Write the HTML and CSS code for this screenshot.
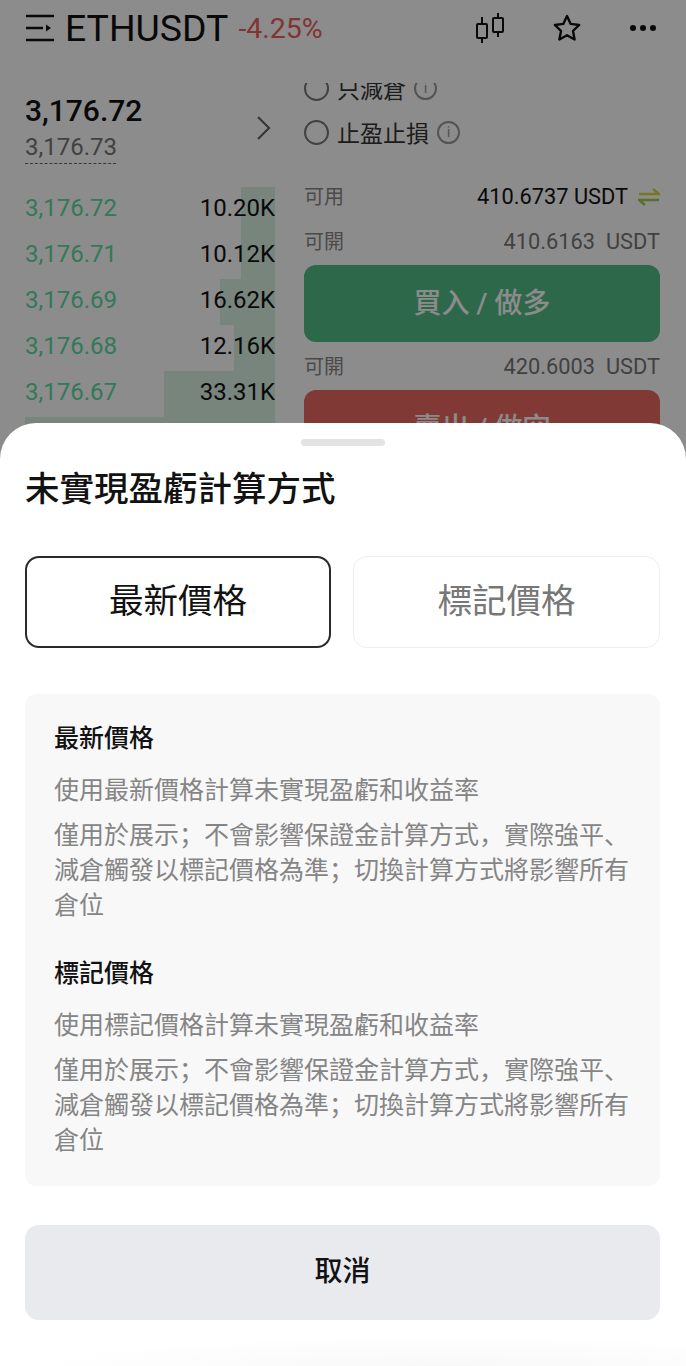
FILE: index.html
```html
<!DOCTYPE html>
<html lang="zh-Hant">
<head>
  <meta charset="UTF-8" />
  <meta name="viewport" content="width=device-width, initial-scale=1" />
  <title>ETHUSDT</title>
  <link rel="stylesheet" href="styles.css">
</head>
<body>
  <div class="page">
    <header class="topbar">
      <svg class="menu-icon" width="30" height="28" viewBox="0 0 30 28">
        <path d="M1 2h28M1 14h17M1 26h28" stroke="#121212" stroke-width="2.4" fill="none"/>
        <path d="M21 10.5l5 3.5-5 3.5z" fill="#121212"/>
      </svg>
      <div class="symbol">ETHUSDT</div>
      <div class="change">-4.25%</div>
      <div class="top-actions">
        <svg width="30" height="32" viewBox="0 0 30 32" fill="none" stroke="#121212" stroke-width="2">
          <path d="M7 5v7M7 26v5M23 1v5M23 20v5"/>
          <rect x="2" y="12" width="10" height="14" rx="1"/>
          <rect x="18" y="6" width="10" height="14" rx="1"/>
        </svg>
        <svg width="30" height="30" viewBox="0 0 30 30" fill="none" stroke="#121212" stroke-width="2.4" stroke-linejoin="round">
          <path d="M15 3l3.7 7.9 8.5 1.1-6.2 5.9 1.6 8.6-7.6-4.2-7.6 4.2 1.6-8.6-6.2-5.9 8.5-1.1z"/>
        </svg>
        <svg width="28" height="8" viewBox="0 0 28 8" fill="#121212">
          <circle cx="4" cy="4" r="3"/><circle cx="14" cy="4" r="3"/><circle cx="24" cy="4" r="3"/>
        </svg>
      </div>
    </header>

    <main class="trade">
      <section class="book">
        <div class="book-head">
          <div class="prices">
            <div class="last-price">3,176.72</div>
            <div class="mark-price">3,176.73</div>
          </div>
          <svg width="16" height="26" viewBox="0 0 16 26" fill="none" stroke="#666" stroke-width="2.2">
            <path d="M2 2l11 11L2 24"/>
          </svg>
        </div>
        <div class="book-rows">
          <div class="book-row"><span class="depth depth-34"></span><span class="bid">3,176.72</span><span class="qty">10.20K</span></div>
          <div class="book-row"><span class="depth depth-34"></span><span class="bid">3,176.71</span><span class="qty">10.12K</span></div>
          <div class="book-row"><span class="depth depth-55"></span><span class="bid">3,176.69</span><span class="qty">16.62K</span></div>
          <div class="book-row"><span class="depth depth-41"></span><span class="bid">3,176.68</span><span class="qty">12.16K</span></div>
          <div class="book-row"><span class="depth depth-111"></span><span class="bid">3,176.67</span><span class="qty">33.31K</span></div>
          <div class="book-row"><span class="depth depth-250"></span></div>
        </div>
      </section>

      <section class="order">
        <div class="options">
          <div class="option"><span class="radio"></span>只減倉<span class="info"><i>i</i></span></div>
          <div class="option"><span class="radio"></span>止盈止損<span class="info"><i>i</i></span></div>
        </div>
        <div class="order-line order-first">
          <span>可用</span>
          <span class="balance">410.6737 USDT
            <svg width="22" height="18" viewBox="0 0 22 18" fill="none" stroke-width="2.4">
              <path d="M1 6h20L15 1" stroke="#d8d84a"/><path d="M21 12H1l6 5" stroke="#9fd04a"/>
            </svg>
          </span>
        </div>
        <div class="order-line"><span>可開</span><span class="amount">410.6163&nbsp; USDT</span></div>
        <div class="btn btn-buy">買入 / 做多</div>
        <div class="order-line order-after-buy"><span>可開</span><span class="amount">420.6003&nbsp; USDT</span></div>
        <div class="btn btn-sell">賣出 / 做空</div>
      </section>
    </main>

    <div class="scrim"></div>

    <div class="sheet">
      <div class="handle"></div>
      <h2 class="sheet-title">未實現盈虧計算方式</h2>
      <div class="tabs">
        <div class="tab tab-active">最新價格</div>
        <div class="tab">標記價格</div>
      </div>
      <div class="notes">
        <div class="note">
          <h3>最新價格</h3>
          <p>使用最新價格計算未實現盈虧和收益率</p>
          <p>僅用於展示；不會影響保證金計算方式，實際強平、減倉觸發以標記價格為準；切換計算方式將影響所有倉位</p>
        </div>
        <div class="note">
          <h3>標記價格</h3>
          <p>使用標記價格計算未實現盈虧和收益率</p>
          <p>僅用於展示；不會影響保證金計算方式，實際強平、減倉觸發以標記價格為準；切換計算方式將影響所有倉位</p>
        </div>
      </div>
      <div class="cancel">取消</div>
    </div>
  </div>
</body>
</html>
```

FILE: styles.css
```css
* {
  box-sizing: border-box;
  margin: 0;
  padding: 0;
}

body {
  background: #fff;
  color: #121212;
  font-family: Roboto, "Noto Sans CJK SC", sans-serif;
  /* the punctuation sits left in its cell, as in the simplified glyph set */
  font-feature-settings: "locl" 0;
}

.page {
  position: relative;
  width: 686px;
  height: 1366px;
  overflow: hidden;
}

/* Top bar */
.topbar {
  display: flex;
  align-items: center;
  height: 56px;
  padding: 0 29px 0 25px;
}
.menu-icon {
  margin-right: 10px;
}
.symbol {
  font-size: 37.4px;
  line-height: 56px;
}
.change {
  margin-left: 10px;
  font-size: 28.5px;
  color: #ec5f5b;
}
.top-actions {
  display: flex;
  align-items: center;
  gap: 47px;
  margin-left: auto;
}

/* Two columns under the bar */
.trade {
  display: grid;
  grid-template-columns: 250px 356px;
  gap: 29px;
  padding: 22px 0 0 25px;
}

.book-head {
  display: flex;
  justify-content: space-between;
  align-items: center;
  height: 109px;
  padding: 0 3px 9px 0;
}
.last-price {
  font-size: 30px;
  font-weight: 500;
  line-height: 36px;
}
.mark-price {
  width: 91px;
  margin-top: 3px;
  padding-bottom: 1px;
  font-size: 24px;
  line-height: 30px;
  color: #777;
  border-bottom: 1.5px dashed #666;
}
.book-rows {
  display: flex;
  flex-direction: column;
}
.book-row {
  position: relative;
  display: flex;
  justify-content: space-between;
  align-items: center;
  height: 46px;
  padding-bottom: 4px;
  font-size: 24px;
}
.bid {
  position: relative;
  color: #5cdca2;
}
.qty {
  position: relative;
}
.depth {
  position: absolute;
  top: 0;
  right: 0;
  bottom: 0;
  background: #d9f2e3;
}
.depth-34 { width: 34px; }
.depth-55 { width: 55px; }
.depth-41 { width: 41px; }
.depth-111 { width: 111px; }
.depth-250 { width: 250px; }

/* Order form, scrolled so the first option is cut off */
.order {
  height: 395px;
  margin-top: 5px;
  overflow: hidden;
}
.options {
  margin-top: -17px;
}
.option {
  display: flex;
  align-items: center;
  height: 44px;
  font-size: 23px;
  color: #333;
}
.radio {
  width: 25px;
  height: 25px;
  margin-right: 8px;
  border: 2px solid #777;
  border-radius: 50%;
}
.info {
  display: flex;
  justify-content: center;
  align-items: center;
  width: 23px;
  height: 23px;
  margin-left: 8px;
  border: 2px solid #999;
  border-radius: 50%;
  font-size: 15px;
  color: #999;
}
.info i {
  font-style: normal;
}
.order-line {
  display: flex;
  justify-content: space-between;
  align-items: center;
  height: 45px;
  font-size: 21.8px;
  color: #888;
}
.order-line > span:first-child {
  padding-bottom: 2px;
  font-size: 20px;
}
.order-first {
  margin-top: 20px;
}
.order-after-buy {
  padding-top: 3px;
}
.balance {
  display: flex;
  align-items: center;
  gap: 10px;
  color: #121212;
}
.amount {
  color: #777;
}
.btn {
  display: flex;
  justify-content: center;
  align-items: center;
  height: 77px;
  padding-bottom: 6px;
  border-radius: 12px;
  font-size: 28px;
  font-weight: 500;
  color: #fff;
}
.btn-buy {
  margin-top: 1px;
  background: #52bd88;
}
.btn-sell {
  margin-top: 3px;
  background: #ec6861;
}

.scrim {
  position: absolute;
  inset: 0;
  background: rgba(0, 0, 0, 0.45);
}

/* Bottom sheet */
.sheet {
  position: absolute;
  left: 0;
  right: 0;
  top: 423px;
  bottom: 0;
  padding: 16px 26px 0 25px;
  background: #fff;
  border-radius: 36px 36px 0 0;
}
.sheet::after {
  content: "";
  position: absolute;
  left: 0;
  right: 0;
  bottom: 0;
  height: 30px;
  background: radial-gradient(ellipse 420px 30px at 65% 100%, #f8f8f9, rgba(255, 255, 255, 0));
}
.handle {
  width: 84px;
  height: 7px;
  margin: 0 auto;
  border-radius: 4px;
  background: #e3e3e3;
}
.sheet-title {
  margin-top: 22px;
  font-size: 34.5px;
  line-height: 42px;
  font-weight: 500;
}
.tabs {
  display: grid;
  grid-template-columns: 306px 307px;
  gap: 22px;
  margin-top: 46px;
}
.tab {
  display: flex;
  justify-content: center;
  align-items: center;
  height: 92px;
  padding-bottom: 8px;
  border: 1px solid #eeeeee;
  border-radius: 14px;
  font-size: 34.5px;
  color: #777;
}
.tab-active {
  border: 2px solid #2a2a2a;
  color: #121212;
}
.notes {
  display: flex;
  flex-direction: column;
  gap: 33px;
  margin-top: 46px;
  padding: 27px 29px 28px;
  background: #f8f8f9;
  border-radius: 12px;
}
.note h3 {
  font-size: 25px;
  line-height: 36px;
  font-weight: 500;
}
.note p {
  margin-top: 16px;
  font-size: 25px;
  line-height: 35px;
  color: #858585;
}
.note p + p {
  margin-top: 10px;
}
.cancel {
  display: flex;
  justify-content: center;
  align-items: center;
  height: 95px;
  margin-top: 39px;
  padding-bottom: 8px;
  background: #e9eaee;
  border-radius: 14px;
  font-size: 28px;
  font-weight: 500;
}
```
